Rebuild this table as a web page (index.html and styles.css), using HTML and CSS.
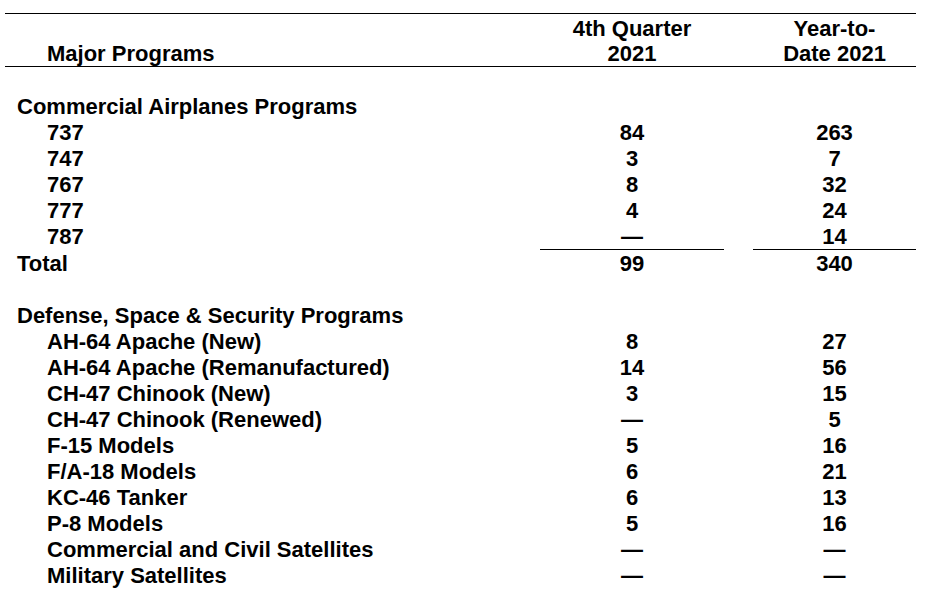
FILE: index.html
```html
<!DOCTYPE html>
<html>
<head>
<meta charset="utf-8">
<link rel="stylesheet" href="styles.css">
</head>
<body>
<table class="programs">
  <colgroup>
    <col class="c-label"><col class="c-q"><col class="c-gap"><col class="c-ytd">
  </colgroup>
  <thead>
    <tr class="head">
      <th class="label item">Major Programs</th>
      <th class="num">4th Quarter<br>2021</th>
      <th class="gap"></th>
      <th class="num">Year-to-<br>Date 2021</th>
    </tr>
  </thead>
  <tbody>
    <tr class="blank"><td colspan="4"></td></tr>
    <tr><td class="label section">Commercial Airplanes Programs</td><td></td><td></td><td></td></tr>
    <tr><td class="label item">737</td><td class="num">84</td><td></td><td class="num">263</td></tr>
    <tr><td class="label item">747</td><td class="num">3</td><td></td><td class="num">7</td></tr>
    <tr><td class="label item">767</td><td class="num">8</td><td></td><td class="num">32</td></tr>
    <tr><td class="label item">777</td><td class="num">4</td><td></td><td class="num">24</td></tr>
    <tr class="subtotal"><td class="label item">787</td><td class="num rule">—</td><td></td><td class="num rule">14</td></tr>
    <tr><td class="label section">Total</td><td class="num">99</td><td></td><td class="num">340</td></tr>
    <tr class="blank"><td colspan="4"></td></tr>
    <tr><td class="label section">Defense, Space &amp; Security Programs</td><td></td><td></td><td></td></tr>
    <tr><td class="label item">AH-64 Apache (New)</td><td class="num">8</td><td></td><td class="num">27</td></tr>
    <tr><td class="label item">AH-64 Apache (Remanufactured)</td><td class="num">14</td><td></td><td class="num">56</td></tr>
    <tr><td class="label item">CH-47 Chinook (New)</td><td class="num">3</td><td></td><td class="num">15</td></tr>
    <tr><td class="label item">CH-47 Chinook (Renewed)</td><td class="num">—</td><td></td><td class="num">5</td></tr>
    <tr><td class="label item">F-15 Models</td><td class="num">5</td><td></td><td class="num">16</td></tr>
    <tr><td class="label item">F/A-18 Models</td><td class="num">6</td><td></td><td class="num">21</td></tr>
    <tr><td class="label item">KC-46 Tanker</td><td class="num">6</td><td></td><td class="num">13</td></tr>
    <tr><td class="label item">P-8 Models</td><td class="num">5</td><td></td><td class="num">16</td></tr>
    <tr><td class="label item">Commercial and Civil Satellites</td><td class="num">—</td><td></td><td class="num">—</td></tr>
    <tr><td class="label item">Military Satellites</td><td class="num">—</td><td></td><td class="num">—</td></tr>
  </tbody>
</table>
</body>
</html>
```
FILE: styles.css
```css
html, body {
  margin: 0;
  padding: 0;
  background: #fff;
}

body {
  font-family: "Liberation Sans", Arial, sans-serif;
  font-weight: bold;
  font-size: 22px;
  color: #000;
}

.programs {
  margin: 13px 0 0 5px;
  width: 911px;
  border-collapse: collapse;
  table-layout: fixed;
}

.c-label { width: 535px; }
.c-q { width: 184px; }
.c-gap { width: 29px; }
.c-ytd { width: 163px; }

.programs th,
.programs td {
  padding: 2px 0 0 0;
  line-height: 24px;
  font-weight: bold;
  vertical-align: top;
}

.programs .head th {
  padding-top: 2px;
  line-height: 25px;
  border-top: 1px solid #000;
  border-bottom: 1px solid #000;
  vertical-align: bottom;
}

.programs .blank td {
  padding: 0;
  height: 26px;
}

.label {
  text-align: left;
  white-space: nowrap;
}

.programs .section { padding-left: 12px; }
.programs .item { padding-left: 42px; }

.num { text-align: center; }

.rule { border-bottom: 1px solid #000; }
```
